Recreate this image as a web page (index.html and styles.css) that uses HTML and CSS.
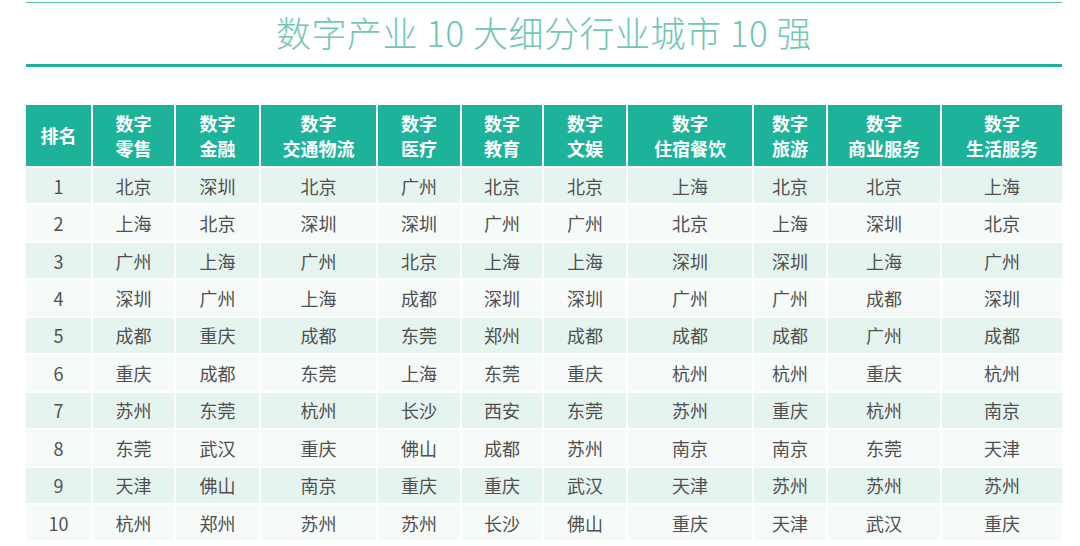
FILE: index.html
```html
<!DOCTYPE html>
<html lang="zh">
<head>
<meta charset="utf-8">
<title>数字产业 10 大细分行业城市 10 强</title>
<link rel="stylesheet" href="styles.css">
</head>
<body>
<div class="page">
  <div class="rule-top"></div>
  <h1 class="title">数字产业 10 大细分行业城市 10 强</h1>
  <div class="rule-bottom"></div>
  <div class="grid">
    <div class="th">排名</div>
    <div class="th">数字<br>零售</div>
    <div class="th">数字<br>金融</div>
    <div class="th">数字<br>交通物流</div>
    <div class="th">数字<br>医疗</div>
    <div class="th">数字<br>教育</div>
    <div class="th">数字<br>文娱</div>
    <div class="th">数字<br>住宿餐饮</div>
    <div class="th">数字<br>旅游</div>
    <div class="th">数字<br>商业服务</div>
    <div class="th">数字<br>生活服务</div>

    <div class="td odd">1</div><div class="td odd">北京</div><div class="td odd">深圳</div><div class="td odd">北京</div><div class="td odd">广州</div><div class="td odd">北京</div><div class="td odd">北京</div><div class="td odd">上海</div><div class="td odd">北京</div><div class="td odd">北京</div><div class="td odd">上海</div>
    <div class="td even">2</div><div class="td even">上海</div><div class="td even">北京</div><div class="td even">深圳</div><div class="td even">深圳</div><div class="td even">广州</div><div class="td even">广州</div><div class="td even">北京</div><div class="td even">上海</div><div class="td even">深圳</div><div class="td even">北京</div>
    <div class="td odd">3</div><div class="td odd">广州</div><div class="td odd">上海</div><div class="td odd">广州</div><div class="td odd">北京</div><div class="td odd">上海</div><div class="td odd">上海</div><div class="td odd">深圳</div><div class="td odd">深圳</div><div class="td odd">上海</div><div class="td odd">广州</div>
    <div class="td even">4</div><div class="td even">深圳</div><div class="td even">广州</div><div class="td even">上海</div><div class="td even">成都</div><div class="td even">深圳</div><div class="td even">深圳</div><div class="td even">广州</div><div class="td even">广州</div><div class="td even">成都</div><div class="td even">深圳</div>
    <div class="td odd">5</div><div class="td odd">成都</div><div class="td odd">重庆</div><div class="td odd">成都</div><div class="td odd">东莞</div><div class="td odd">郑州</div><div class="td odd">成都</div><div class="td odd">成都</div><div class="td odd">成都</div><div class="td odd">广州</div><div class="td odd">成都</div>
    <div class="td even">6</div><div class="td even">重庆</div><div class="td even">成都</div><div class="td even">东莞</div><div class="td even">上海</div><div class="td even">东莞</div><div class="td even">重庆</div><div class="td even">杭州</div><div class="td even">杭州</div><div class="td even">重庆</div><div class="td even">杭州</div>
    <div class="td odd">7</div><div class="td odd">苏州</div><div class="td odd">东莞</div><div class="td odd">杭州</div><div class="td odd">长沙</div><div class="td odd">西安</div><div class="td odd">东莞</div><div class="td odd">苏州</div><div class="td odd">重庆</div><div class="td odd">杭州</div><div class="td odd">南京</div>
    <div class="td even">8</div><div class="td even">东莞</div><div class="td even">武汉</div><div class="td even">重庆</div><div class="td even">佛山</div><div class="td even">成都</div><div class="td even">苏州</div><div class="td even">南京</div><div class="td even">南京</div><div class="td even">东莞</div><div class="td even">天津</div>
    <div class="td odd">9</div><div class="td odd">天津</div><div class="td odd">佛山</div><div class="td odd">南京</div><div class="td odd">重庆</div><div class="td odd">重庆</div><div class="td odd">武汉</div><div class="td odd">天津</div><div class="td odd">苏州</div><div class="td odd">苏州</div><div class="td odd">苏州</div>
    <div class="td even">10</div><div class="td even">杭州</div><div class="td even">郑州</div><div class="td even">苏州</div><div class="td even">苏州</div><div class="td even">长沙</div><div class="td even">佛山</div><div class="td even">重庆</div><div class="td even">天津</div><div class="td even">武汉</div><div class="td even">重庆</div>
  </div>
</div>
</body>
</html>
```
FILE: styles.css
```css
html, body {
  margin: 0;
  padding: 0;
  background: #ffffff;
}
body {
  font-family: "Noto Sans CJK SC", "Noto Sans", sans-serif;
  color: #4d4d4d;
}
.page {
  width: 1036px;
  margin-left: 26px;
  padding-top: 2px;
}
.rule-top {
  height: 1px;
  background: #52c2ae;
}
.title {
  margin: 0;
  height: 57px;
  padding-bottom: 4px;
  display: flex;
  align-items: center;
  justify-content: center;
  font-size: 35px;
  font-weight: 300;
  color: #72c6b4;
  letter-spacing: 0.5px;
}
.rule-bottom {
  height: 3px;
  background: #1fb39b;
}
.grid {
  margin-top: 38px;
  display: grid;
  grid-template-columns: 65px 81px 83px 115px 82px 80px 82px 124px 72px 112px 120px;
  grid-template-rows: 61px repeat(10, 35.45px);
  gap: 2px;
}
.th {
  background: #1db39b;
  color: #ffffff;
  font-weight: 700;
  font-size: 18px;
  line-height: 25px;
  display: flex;
  align-items: center;
  justify-content: center;
  text-align: center;
}
.td {
  font-size: 18px;
  display: flex;
  align-items: center;
  justify-content: center;
  color: #505050;
}
.odd {
  background: #e6f4f0;
}
.even {
  background: #f6fbf9;
}
```
